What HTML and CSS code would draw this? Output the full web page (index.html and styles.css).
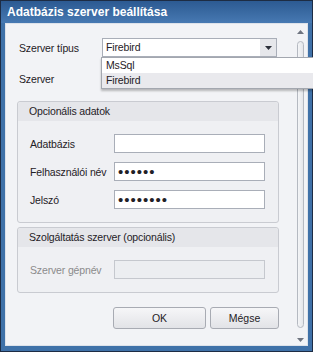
FILE: index.html
```html
<!DOCTYPE html>
<html lang="hu">
<head>
    <meta charset="UTF-8">
    <meta name="viewport" content="width=device-width, initial-scale=1.0">
    <title>Adatbázis szerver beállítása</title>
    <link rel="stylesheet" href="styles.css">
</head>
<body>
    <div class="window">
        <div class="titlebar">Adatbázis szerver beállítása</div>

        <div class="client">
            <div class="content">
                <div class="row first-row">
                    <label class="label">Szerver típus</label>
                    <div class="combo">
                        <span class="combo-text">Firebird</span>
                        <span class="combo-btn">
                            <svg width="7" height="4" viewBox="0 0 7 4"><path d="M0 0H7L3.5 4Z" fill="#2b2f3a"/></svg>
                        </span>
                    </div>
                </div>
                <div class="row second-row">
                    <label class="label">Szerver</label>
                    <input class="field combo-field" type="text">
                </div>

                <div class="group">
                    <div class="group-header">Opcionális adatok</div>
                    <div class="group-body">
                        <div class="row">
                            <label class="label group-label" for="db">Adatbázis</label>
                            <input class="field" id="db" type="text">
                        </div>
                        <div class="row">
                            <label class="label group-label" for="user">Felhasználói név</label>
                            <input class="field secret" id="user" type="password" value="aaaaaa">
                        </div>
                        <div class="row">
                            <label class="label group-label" for="pass">Jelszó</label>
                            <input class="field secret" id="pass" type="password" value="aaaaaaaa">
                        </div>
                    </div>
                </div>

                <div class="group second-group">
                    <div class="group-header">Szolgáltatás szerver (opcionális)</div>
                    <div class="group-body">
                        <div class="row">
                            <label class="label group-label disabled" for="host">Szerver gépnév</label>
                            <input class="field" id="host" type="text" disabled>
                        </div>
                    </div>
                </div>

                <div class="buttons">
                    <button class="btn ok-btn">OK</button>
                    <button class="btn cancel-btn">Mégse</button>
                </div>
            </div>

            <div class="scrollbar">
                <svg class="arrow" width="7" height="4" viewBox="0 0 7 4"><path d="M0 4H7L3.5 0Z" fill="#6f7480"/></svg>
                <div class="thumb"></div>
                <svg class="arrow" width="7" height="4" viewBox="0 0 7 4"><path d="M0 0H7L3.5 4Z" fill="#6f7480"/></svg>
            </div>
        </div>

        <!-- open list of the server type combo -->
        <ul class="dropdown">
            <li>MsSql</li>
            <li class="selected">Firebird</li>
        </ul>
    </div>
</body>
</html>
```

FILE: styles.css
```css
body {
    margin: 0;
    font-family: "Liberation Sans", Arial, sans-serif;
    font-size: 10.5px;
    letter-spacing: -0.15px;
    color: #1f2126;
    overflow: hidden;
}
.window {
    position: relative;
    width: 313px;
    height: 352px;
    box-sizing: border-box;
    border: 1px solid #1d2c44;
    background: #3f71a8;
    padding: 0 4px 5px 4px;
    display: flex;
    flex-direction: column;
}
.titlebar {
    height: 22px;
    margin: 0 -4px;
    padding-left: 6px;
    line-height: 22px;
    font-size: 12px;
    font-weight: bold;
    letter-spacing: 0;
    color: #fff;
    background: linear-gradient(#2c5a92, #4779b2);
}
.client {
    flex: 1;
    display: flex;
    background: #f2f3f6;
    border: 1px solid #dde2ea;
}
.content {
    flex: 1;
    padding-left: 11px;
}
.row {
    display: flex;
    align-items: center;
    height: 19px;
}
.first-row {
    margin-top: 14px;
}
.second-row {
    margin-top: 12px;
}
.label {
    width: 83px;
    padding-left: 2px;
    white-space: nowrap;
}
.combo {
    width: 175px;
    height: 19px;
    box-sizing: border-box;
    display: flex;
    background: #fff;
    border: 1px solid #a9aeb8;
}
.combo-text {
    flex: 1;
    padding-left: 3px;
    line-height: 17px;
}
.combo-btn {
    width: 16px;
    display: flex;
    align-items: center;
    justify-content: center;
    background: #e6e7eb;
}
.field {
    width: 151px;
    height: 19px;
    box-sizing: border-box;
    margin: 0;
    padding: 0 3px;
    border: 1px solid #a9aeb8;
    background: #fff;
    font-family: inherit;
    font-size: 11px;
    outline: none;
}
.combo-field {
    width: 175px;
}
.secret {
    font-size: 15px;
    letter-spacing: 1px;
    color: #1f2126;
}
.field:disabled {
    background: #eceef1;
    border-color: #c5c8ce;
}
.group {
    width: 262px;
    box-sizing: border-box;
    margin-top: 13px;
    border: 1px solid #c9cbd1;
    border-radius: 3px;
    background: #eff0f3;
}
.second-group {
    margin-top: 4px;
}
.group-header {
    height: 19px;
    line-height: 19px;
    padding-left: 11px;
    background: #e5e6ea;
    border-radius: 3px 3px 0 0;
}
.group-body {
    padding: 13px 0 13px 12px;
    display: flex;
    flex-direction: column;
    gap: 9px;
}
.group-label {
    width: 84px;
    padding-left: 0;
}
.disabled {
    color: #8b8b8b;
}
.buttons {
    width: 262px;
    margin-top: 14px;
    display: flex;
    justify-content: flex-end;
    gap: 4px;
}
.btn {
    height: 22px;
    padding: 0;
    font-family: inherit;
    font-size: 10.5px;
    color: #1f2126;
    border: 1px solid #a8abb3;
    border-radius: 3px;
    background: linear-gradient(#f6f6f8, #e2e3e7);
}
.ok-btn {
    width: 93px;
}
.cancel-btn {
    width: 69px;
}
.scrollbar {
    width: 14px;
    display: flex;
    flex-direction: column;
    align-items: center;
    padding-top: 6px;
}
.thumb {
    width: 7px;
    height: 287px;
    box-sizing: border-box;
    margin: 7px 0 10px;
    border: 1px solid #b5b9c1;
    border-radius: 4px;
    background: linear-gradient(90deg, #f4f5f7, #e4e6ea);
}
.dropdown {
    position: absolute;
    left: 100px;
    right: -1px;
    top: 56px;
    margin: 0;
    padding: 0;
    list-style: none;
    background: #fff;
    border: 1px solid #a3a7af;
    border-right: none;
    box-shadow: 0 2px 2px rgba(0, 0, 0, 0.25);
}
.dropdown li {
    height: 15px;
    line-height: 15px;
    padding-left: 4px;
}
.dropdown .selected {
    background: #e9e9ed;
}
```
